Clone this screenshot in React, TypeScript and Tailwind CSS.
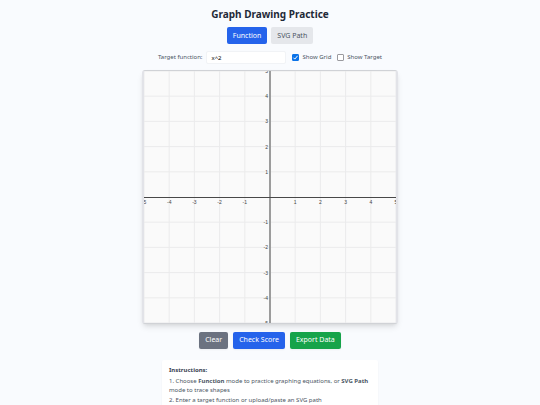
import { useState } from 'react';

const SIZE = 252;
const CENTER = SIZE / 2;
const UNIT = SIZE / 10;
const TICKS = [-5, -4, -3, -2, -1, 1, 2, 3, 4, 5];

function Graph({ showGrid, showTarget }: { showGrid: boolean; showTarget: boolean }) {
  const points = Array.from({ length: 101 }, (_, i) => {
    const x = -5 + i / 10;
    return `${CENTER + x * UNIT},${CENTER - x * x * UNIT}`;
  }).join(' ');

  return (
    <svg viewBox={`0 0 ${SIZE} ${SIZE}`} className="block w-full">
      {showGrid &&
        TICKS.map((t) => (
          <g key={t} stroke="#ebebec" strokeWidth="1">
            <line x1={CENTER + t * UNIT} y1="0" x2={CENTER + t * UNIT} y2={SIZE} />
            <line x1="0" y1={CENTER - t * UNIT} x2={SIZE} y2={CENTER - t * UNIT} />
          </g>
        ))}

      {/* Axes */}
      <line x1={CENTER} y1="0" x2={CENTER} y2={SIZE} stroke="#9c9c9c" strokeWidth="2" />
      <line x1="0" y1="126.5" x2={SIZE} y2="126.5" stroke="#484848" strokeWidth="1" />

      {/* Tick labels */}
      {TICKS.map((t) => (
        <g key={t} className="fill-[#444] font-['Liberation_Sans',sans-serif] text-[5px]">
          <text x={CENTER + t * UNIT} y="133" textAnchor="middle">{t}</text>
          <text x="124" y={CENTER - t * UNIT + 2} textAnchor="end">{t}</text>
        </g>
      ))}

      {showTarget && <polyline points={points} fill="none" stroke="#2563eb" strokeWidth="1" />}
    </svg>
  );
}

type CheckProps = { label: string; checked: boolean; onChange: (value: boolean) => void };

function Check({ label, checked, onChange }: CheckProps) {
  return (
    <label className="flex items-center gap-[3px]">
      <span className="grid size-[7px]">
        <input
          type="checkbox"
          checked={checked}
          onChange={(e) => onChange(e.target.checked)}
          className="col-start-1 row-start-1 size-[7px] appearance-none rounded-[1px] border border-[#9a9a9f] bg-white checked:border-[#0b73e8] checked:bg-[#0b73e8]"
        />
        {checked && (
          <svg viewBox="0 0 7 7" className="pointer-events-none col-start-1 row-start-1 size-[7px]">
            <path d="M1.4 3.7 2.8 5.1 5.6 1.8" fill="none" stroke="white" strokeWidth="1" />
          </svg>
        )}
      </span>
      {label}
    </label>
  );
}

export default function App() {
  const [mode, setMode] = useState('function');
  const [target, setTarget] = useState('x^2');
  const [showGrid, setShowGrid] = useState(true);
  const [showTarget, setShowTarget] = useState(false);

  const tabClass = (active: boolean) =>
    active
      ? 'h-[17px] rounded-xs bg-[#2563eb] px-1.5 text-white'
      : 'h-[17px] rounded-xs bg-[#e5e7eb] px-1.5 text-[#4b5563]';

  return (
    <main className="flex min-h-screen flex-col items-center bg-[#f9fbfe] px-4 pt-2 font-['Noto_Sans',sans-serif] text-[7px] text-[#4b5563]">
      <h1 className="text-[10px] leading-3 font-bold text-[#1f2937]">Graph Drawing Practice</h1>

      <div className="mt-[7px] flex gap-1">
        <button onClick={() => setMode('function')} className={`${tabClass(mode === 'function')} pt-px`}>Function</button>
        <button onClick={() => setMode('svg')} className={`${tabClass(mode === 'svg')} pt-px`}>SVG Path</button>
      </div>

      <div className="mt-[7px] flex h-[13px] items-center gap-1.5 text-[6px]">
        <div className="flex items-center gap-1">
          <label htmlFor="target">Target function:</label>
          <input
            id="target"
            value={target}
            onChange={(e) => setTarget(e.target.value)}
            className="h-[13px] w-20 rounded-xs border border-[#f1f3f6] bg-white px-1 text-black"
          />
        </div>
        <Check label="Show Grid" checked={showGrid} onChange={setShowGrid} />
        <Check label="Show Target" checked={showTarget} onChange={setShowTarget} />
      </div>

      <div className="mt-1.5 w-full max-w-[256px] overflow-hidden rounded-[3px] border-x-2 border-y border-x-[#e2e3e8] border-y-[#d0d2d6] bg-[#fafafa] shadow-md">
        <Graph showGrid={showGrid} showTarget={showTarget} />
      </div>

      <div className="mt-2 flex gap-[5px] text-white">
        <button className="h-[17px] rounded-xs bg-[#6b7280] px-1.5 shadow-xs">Clear</button>
        <button className="h-[17px] rounded-xs bg-[#2563eb] px-1.5 shadow-xs">Check Score</button>
        <button className="h-[17px] rounded-xs bg-[#16a34a] px-1.5 shadow-xs">Export Data</button>
      </div>

      <section className="mt-[11px] w-full max-w-[216px] rounded-xs bg-white px-[7px] py-1.5 text-[6px] leading-[9px] shadow-xs">
        <h2 className="font-bold text-[#374151]">Instructions:</h2>
        <ol className="mt-0.5 list-inside list-decimal space-y-px">
          <li>Choose <strong>Function</strong> mode to practice graphing equations, or <strong>SVG Path</strong> mode to trace shapes</li>
          <li>Enter a target function or upload/paste an SVG path</li>
        </ol>
      </section>
    </main>
  );
}
